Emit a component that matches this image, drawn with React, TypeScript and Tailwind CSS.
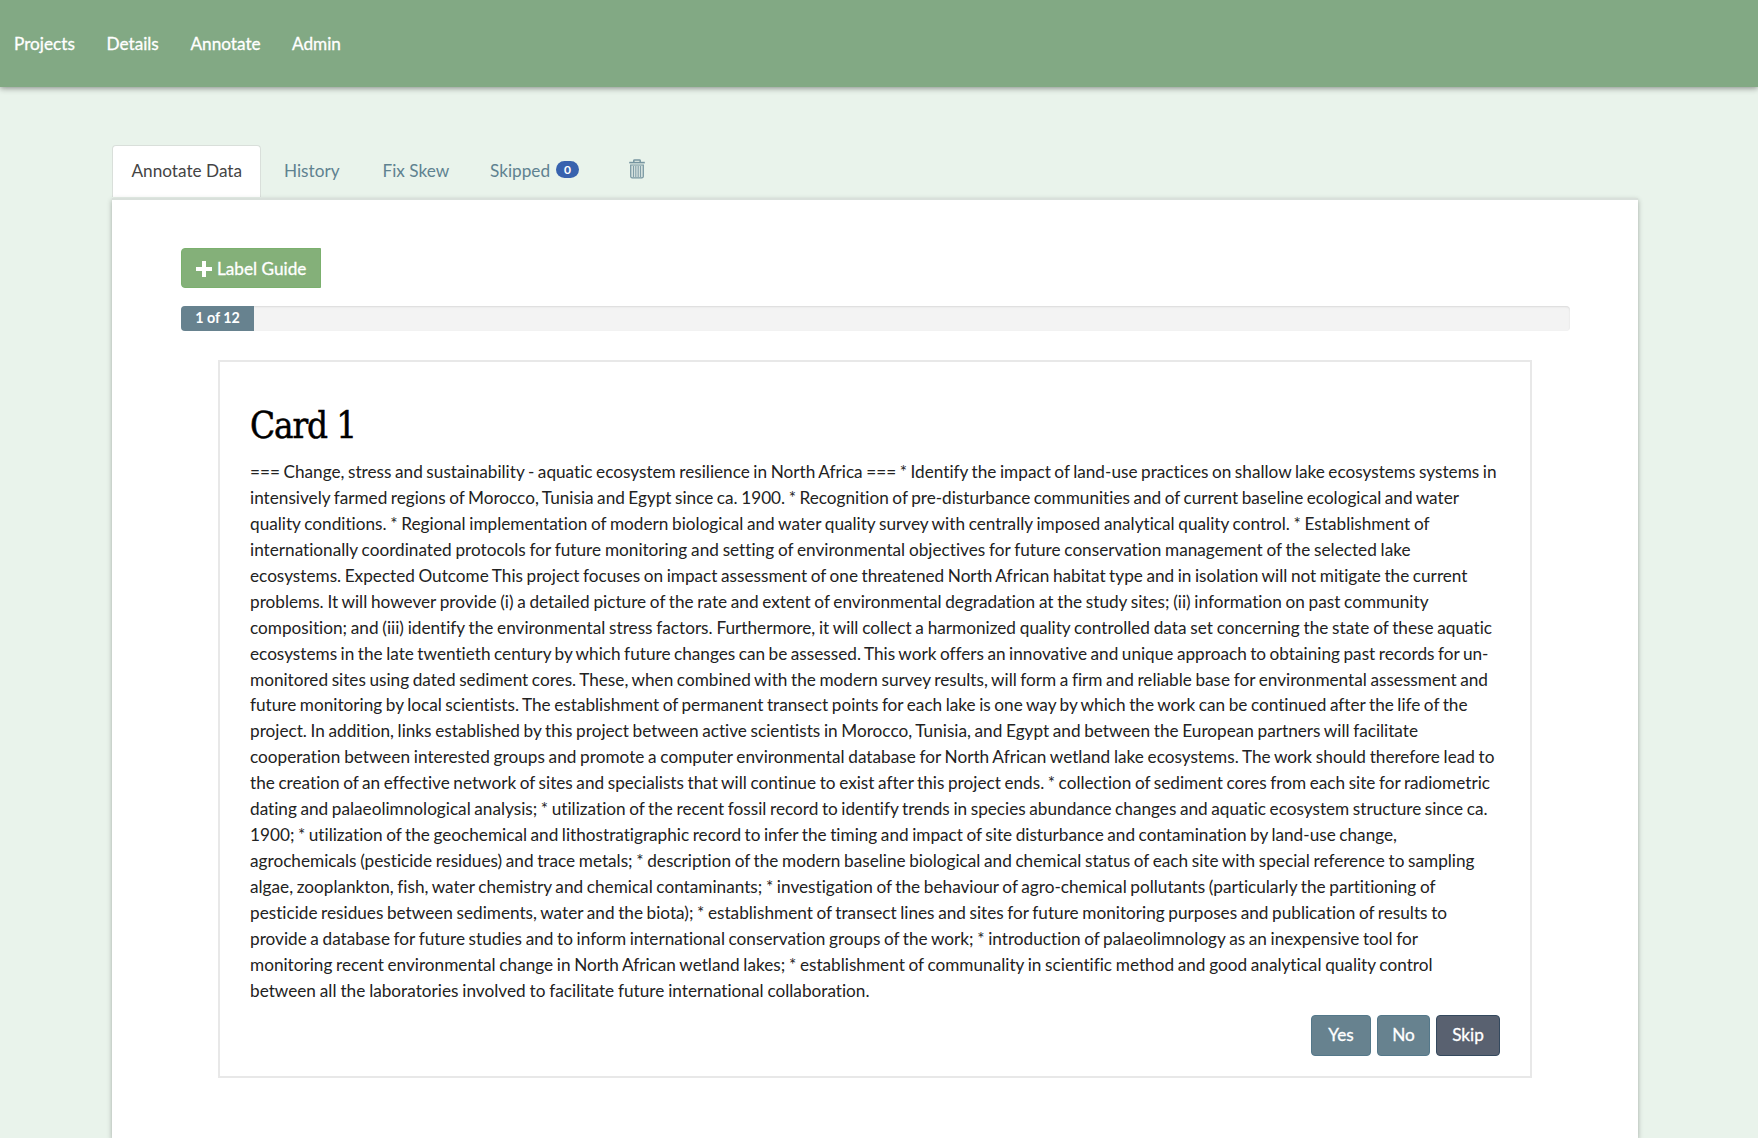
import React from "react";

type Line = { text: string; width: number };

const LINES: Line[] = [
  { width: 1246.5, text: "=== Change, stress and sustainability - aquatic ecosystem resilience in North Africa === * Identify the impact of land-use practices on shallow lake ecosystems systems in" },
  { width: 1209, text: "intensively farmed regions of Morocco, Tunisia and Egypt since ca. 1900. * Recognition of pre-disturbance communities and of current baseline ecological and water" },
  { width: 1179.5, text: "quality conditions. * Regional implementation of modern biological and water quality survey with centrally imposed analytical quality control. * Establishment of" },
  { width: 1160.5, text: "internationally coordinated protocols for future monitoring and setting of environmental objectives for future conservation management of the selected lake" },
  { width: 1217.5, text: "ecosystems. Expected Outcome This project focuses on impact assessment of one threatened North African habitat type and in isolation will not mitigate the current" },
  { width: 1178.5, text: "problems. It will however provide (i) a detailed picture of the rate and extent of environmental degradation at the study sites; (ii) information on past community" },
  { width: 1242, text: "composition; and (iii) identify the environmental stress factors. Furthermore, it will collect a harmonized quality controlled data set concerning the state of these aquatic" },
  { width: 1238.5, text: "ecosystems in the late twentieth century by which future changes can be assessed. This work offers an innovative and unique approach to obtaining past records for un-" },
  { width: 1238, text: "monitored sites using dated sediment cores. These, when combined with the modern survey results, will form a firm and reliable base for environmental assessment and" },
  { width: 1217.5, text: "future monitoring by local scientists. The establishment of permanent transect points for each lake is one way by which the work can be continued after the life of the" },
  { width: 1168, text: "project. In addition, links established by this project between active scientists in Morocco, Tunisia, and Egypt and between the European partners will facilitate" },
  { width: 1244.5, text: "cooperation between interested groups and promote a computer environmental database for North African wetland lake ecosystems. The work should therefore lead to" },
  { width: 1240, text: "the creation of an effective network of sites and specialists that will continue to exist after this project ends. * collection of sediment cores from each site for radiometric" },
  { width: 1237.5, text: "dating and palaeolimnological analysis; * utilization of the recent fossil record to identify trends in species abundance changes and aquatic ecosystem structure since ca." },
  { width: 1147, text: "1900; * utilization of the geochemical and lithostratigraphic record to infer the timing and impact of site disturbance and contamination by land-use change," },
  { width: 1224.5, text: "agrochemicals (pesticide residues) and trace metals; * description of the modern baseline biological and chemical status of each site with special reference to sampling" },
  { width: 1185.5, text: "algae, zooplankton, fish, water chemistry and chemical contaminants; * investigation of the behaviour of agro-chemical pollutants (particularly the partitioning of" },
  { width: 1197, text: "pesticide residues between sediments, water and the biota); * establishment of transect lines and sites for future monitoring purposes and publication of results to" },
  { width: 1168, text: "provide a database for future studies and to inform international conservation groups of the work; * introduction of palaeolimnology as an inexpensive tool for" },
  { width: 1182.5, text: "monitoring recent environmental change in North African wetland lakes; * establishment of communality in scientific method and good analytical quality control" },
  { width: 619.5, text: "between all the laboratories involved to facilitate future international collaboration." },
];

function TrashIcon() {
  return (
    <svg width="16" height="20" viewBox="0 0 16 20" fill="none" stroke="#7795a0">
      <path d="M4.8 3V1.6Q4.8.9 5.6.9h4.8q.8 0 .8.7V3" strokeWidth="1.5" />
      <path d="M.2 3.6h15.6" strokeWidth="1.6" />
      <path d="M1.7 6h12.6v11.6q0 1.2-1.2 1.2H2.9q-1.2 0-1.2-1.2z" strokeWidth="1.2" fill="#d3e0dd" />
      <path d="M4.5 7v11M6.8 7v11M9.2 7v11M11.5 7v11" strokeWidth=".9" />
    </svg>
  );
}

function NavBar() {
  return (
    <nav className="flex h-[87px] items-start bg-[#82a984] pl-[14px] pt-[31px] text-[17.2px] leading-[26px] text-white shadow-[0_1px_6px_rgba(0,0,0,0.45)] [-webkit-text-stroke:0.3px]">
      <a className="w-[92.5px]">Projects</a>
      <a className="w-[84px]">Details</a>
      <a className="w-[101.5px]">Annotate</a>
      <a>Admin</a>
    </nav>
  );
}

function Tabs() {
  return (
    <div className="flex h-[52px] items-stretch text-[17.2px] leading-[26px] text-[#5f8290]">
      <div className="w-[149px] rounded-t-[4px] border border-b-0 border-[#d9dfda] bg-white pl-[18.5px] pt-[12px] text-[#444]">Annotate Data</div>
      <div className="w-[98px] pl-[23px] pt-[13px]">History</div>
      <div className="w-[108px] pl-[23.5px] pt-[13px]">Fix Skew</div>
      <div className="flex w-[162px] pl-[23px] pt-[13px]">
        Skipped
        <span className="ml-[6px] mt-[3px] flex h-[17px] w-[23px] items-center justify-center rounded-full bg-[#3862ae] text-[12px] font-bold leading-none text-white">0</span>
      </div>
      <div className="pt-[14px]"><TrashIcon /></div>
    </div>
  );
}

export default function App() {
  return (
    <div className="flex h-[1138px] w-[1758px] flex-col overflow-hidden bg-[#e9f3eb] font-['Lato',sans-serif] [font-variant-ligatures:none]">
      <NavBar />
      <main className="ml-[112px] mt-[58px] flex w-[1526px] flex-1 flex-col">
        <Tabs />
        <section className="mt-px flex-1 border-t-2 border-[#d9e0db] bg-white px-[69px] pt-[48px] shadow-[0_2px_5px_rgba(0,0,0,0.3)]">
          <button className="flex h-[40px] w-[140px] items-center rounded-l-[4px] border border-[#7bb06e] bg-[#84b079] pl-[14px] pt-px text-[17.2px] text-white [-webkit-text-stroke:0.3px]">
            <svg width="16" height="16" viewBox="0 0 16 16" className="mr-[5px]">
              <path d="M6 0h4v6h6v4h-6v6H6v-6H0V6h6z" fill="currentColor" />
            </svg>
            Label Guide
          </button>
          <div className="mt-[18px] h-[25px] w-[1389px] overflow-hidden rounded-[4px] bg-[#f3f3f3] shadow-[inset_0_1px_2px_rgba(0,0,0,0.1)]">
            <div className="h-full w-[73px] bg-[#67828f] text-center text-[14.3px] font-bold leading-[24px] text-white">1 of 12</div>
          </div>
          <article className="ml-[37px] mt-[29px] h-[718px] w-[1314px] border-2 border-[#e8e8e8] px-[30px] pt-[40px]">
            <h1 className="h-[57px] whitespace-nowrap font-['DejaVu_Serif_Condensed','DejaVu_Serif',serif] text-[36.5px] leading-[48px] tracking-[-1.1px] text-black [-webkit-text-stroke:0.5px]">Card 1</h1>
            <p className="text-[17.2px] leading-[25.93px] text-[#222] [word-spacing:-1.5px]">
              {LINES.map((line) => (
                <span key={line.text} className="block whitespace-nowrap [text-align-last:justify]" style={{ width: line.width }}>
                  {line.text}
                </span>
              ))}
            </p>
            <div className="mt-[11px] flex justify-end gap-[6px] text-[17.2px] text-white [-webkit-text-stroke:0.3px]">
              <button className="h-[41px] w-[60px] rounded-[4px] border border-[#54788a] bg-[#67828f]">Yes</button>
              <button className="h-[41px] w-[53px] rounded-[4px] border border-[#54788a] bg-[#67828f]">No</button>
              <button className="h-[41px] w-[64px] rounded-[4px] border border-[#34495e] bg-[#596170]">Skip</button>
            </div>
          </article>
        </section>
      </main>
    </div>
  );
}
